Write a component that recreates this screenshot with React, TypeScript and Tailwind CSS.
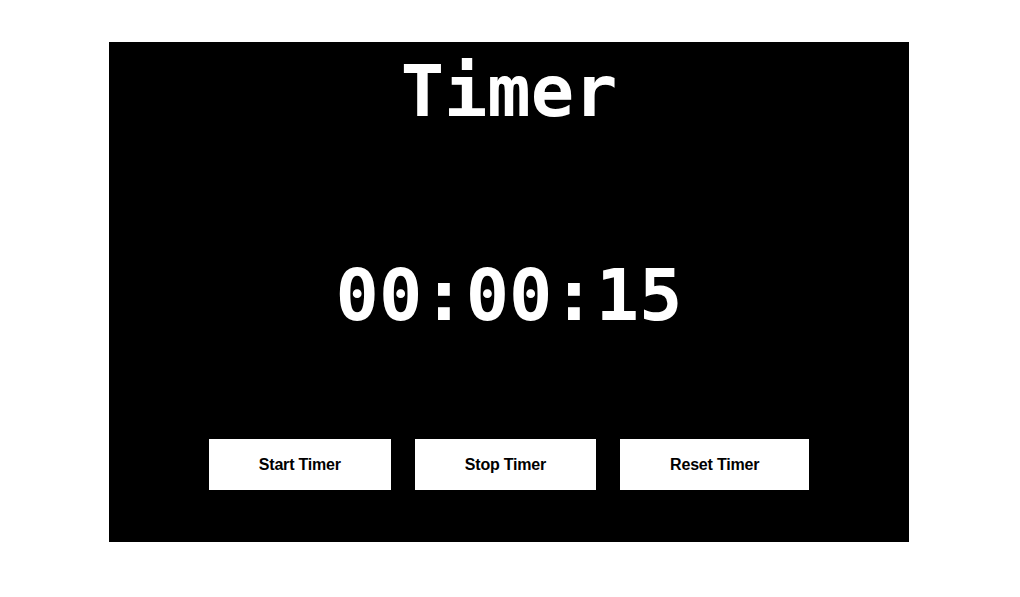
import React from "react";

export default function App() {
  const mono = { fontFamily: '"DejaVu Sans Mono", monospace' };
  return (
    <div className="w-[1020px] h-[597px] bg-white pt-[42px] pl-[109px]">
      <div className="w-[800px] h-[500px] bg-black flex flex-col items-center pt-[13px]">
        <h1
          className="text-[72px] leading-[72px] font-bold text-white"
          style={mono}
        >
          Timer
        </h1>
        <div
          className="mt-[132px] text-[72px] leading-[72px] font-bold text-white"
          style={mono}
        >
          00:00:15
        </div>
        <div className="mt-[108px] flex gap-[24px]">
          {["Start Timer", "Stop Timer", "Reset Timer"].map((t) => (
            <button
              key={t}
              className="h-[51px] px-[50px] bg-white text-black font-bold text-[16px] leading-[18px] tracking-[-0.2px]"
              style={{ fontFamily: '"Liberation Sans", Arial, sans-serif' }}
            >
              {t}
            </button>
          ))}
        </div>
      </div>
    </div>
  );
}
